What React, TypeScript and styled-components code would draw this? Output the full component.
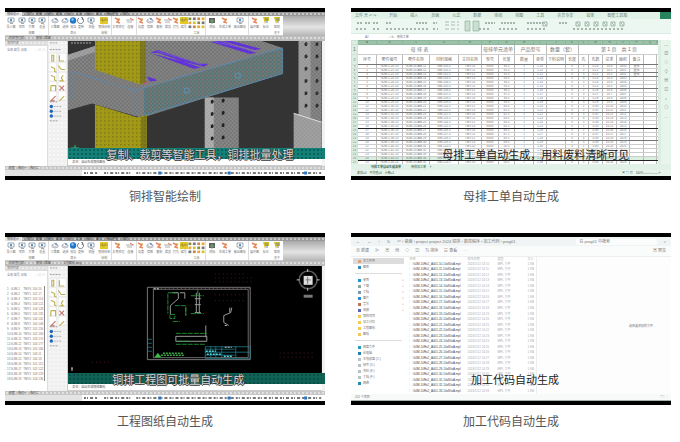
import React from "react";
import styled, { createGlobalStyle, css } from "styled-components";

const GlobalStyle = createGlobalStyle`
  * { box-sizing: border-box; }
  body {
    margin: 0;
    background: #fff;
    color: #555;
    font-family: "Liberation Sans", "Noto Sans CJK SC", sans-serif;
  }
`;

const Gallery = styled.main`
  display: grid;
  grid-template-columns: repeat(2, minmax(0, 1fr));
  column-gap: 26px;
  row-gap: 27px;
  padding: 8px 9px 8px 5px;
`;

const Figure = styled.figure`
  margin: 0;
  min-width: 0;
`;

const Caption = styled.figcaption`
  margin-top: 6px;
  font-size: 12px;
  line-height: 20px;
  text-align: center;
  font-family: "Noto Sans CJK SC", sans-serif;
`;

const Frame = styled.div`
  position: relative;
  display: flex;
  flex-direction: column;
  aspect-ratio: 320 / 172;
  overflow: hidden;
  border-top: 4px solid #000;
  border-bottom: 4px solid #000;
  background: #fff;
  white-space: nowrap;
  line-height: 4px;
  font-size: 3px;
  color: #777;
`;

const Subtitle = styled.div<{ $left: number; $light?: boolean }>`
  position: absolute;
  bottom: 16px;
  left: ${(p) => p.$left}%;
  font: 11px/12px "Noto Sans CJK SC", sans-serif;
  color: #222;
  ${(p) =>
    p.$light &&
    css`
      color: #d3d8d6;
      text-shadow: 1px 0 #333, 0 1px #333, -1px 0 #444;
    `}
`;

const dots = css`
  background-image: radial-gradient(circle, rgba(255, 255, 255, 0.45) 1px, transparent 1px);
  background-size: 4px 4px;
`;

/* ---------- CAD window ---------- */

const MenuStrip = styled.div`
  display: flex;
  flex: 0 0 4px;
  gap: 4px;
  background-color: #999;
  color: #444;
  ${dots}
`;
const ActiveMenu = styled.span`
  width: 17px;
  padding-left: 2px;
  background: #e8e8e8;
`;
const Ribbon = styled.div`
  display: flex;
  flex: 0 0 19px;
  background: #fff;
`;
const RibbonBody = styled.div`
  display: flex;
  flex: 278 1 0;
  min-width: 0;
  border-bottom: 1px solid #ccc;
`;
const RibbonTail = styled.div`
  flex: 42 1 0;
  background-image: linear-gradient(#aaa, #e4e4e4 55%, #b4b4b4);
`;
const Tool = styled.div<{ $grow: number; $divider?: boolean }>`
  display: flex;
  flex: ${(p) => p.$grow} 1 0;
  min-width: 0;
  flex-direction: column;
  align-items: center;
  padding-top: 1px;
  gap: 1px;
  overflow: hidden;
  border-right: ${(p) => (p.$divider ? "1px solid #ddd" : "0")};
  svg { display: block; flex: none; }
`;
const GroupName = styled.span`
  margin-top: 1px;
  color: #777;
`;
const DocTabs = styled.div`
  display: flex;
  flex: 0 0 5px;
  gap: 12px;
  padding: 0 4px;
  background-color: #bdbdbd;
  color: #555;
  ${dots}
`;
const Workspace = styled.div`
  display: flex;
  flex: 1;
  min-height: 0;
`;
const TreePanel = styled.div`
  flex: 0 0 13.5%;
  min-width: 0;
  padding: 1px 2px;
  overflow: hidden;
  background: #fff;
  border-right: 1px solid #ddd;
`;
const PanelTitle = styled.div`
  height: 5px;
  margin: -1px -2px 2px;
  padding-left: 2px;
  background-color: #ddd;
  ${dots}
`;
const TreeTable = styled.table`
  width: 100%;
  margin-top: 9px;
  border-collapse: collapse;
  border-right: 1px solid #888;
  td { padding: 0; height: 5px; line-height: 4px; }
`;
const Filters = styled.div`
  display: flex;
  margin-top: 1px;
  justify-content: space-between;
  color: #789;
`;
const Toolbox = styled.div`
  flex: 0 0 6.25%;
  min-width: 0;
  background-color: #f0f0f0;
  overflow: hidden;
  border-right: 1px solid #ccc;
  ${dots}
  svg { display: block; width: 100%; }
`;
const Viewport = styled.div`
  display: flex;
  flex-direction: column;
  flex: 1 1 0;
  min-width: 0;
  background: #333;
  svg { display: block; flex: 1; min-height: 0; width: 100%; }
`;
const Edge = styled.div<{ $color: string }>`
  display: flex;
  flex: 0 0 1%;
  flex-direction: column;
  justify-content: flex-end;
  padding-bottom: 7px;
  background: #f2f2f2;
  &::after { content: ""; height: 11px; background: ${(p) => p.$color}; }
`;
const Band = styled.div<{ $color: string }>`
  flex: 0 0 11px;
  background-color: ${(p) => p.$color};
  background-image: radial-gradient(circle, rgba(0, 50, 50, 0.4) 1px, transparent 1px);
  background-size: 4px 4px;
`;
const Command = styled.div`
  flex: 0 0 7px;
  padding: 1px 4px;
  background: #fff;
  border-bottom: 1px solid #ccc;
  color: #555;
`;
const Footer = styled.div`
  flex: 0 0 4px;
  padding-left: 4px;
  background-color: #c6c6c6;
  color: #444;
  ${dots}
`;
const StatusIcons = styled.div`
  display: flex;
  flex: 0 0 6px;
  align-items: center;
  background: #e4e4e4;
  svg { margin-left: 24%; width: 76%; height: 6px; background: #fff; }
`;

type IconKind = "screen" | "cube" | "globe" | "sync" | "plate" | "bend" | "link" | "flag" | "grid" | "dark";

function ToolIcon({ kind }: { kind: IconKind }) {
  if (kind === "grid")
    return (
      <svg width="17" height="12" viewBox="0 0 17 12">
        {[0, 1, 2, 3].map((c) =>
          [0, 1, 2].map((r) => (
            <rect key={`${c}${r}`} x={c * 4.4 + 0.5} y={r * 4 + 0.5} width="2.8" height="2.6"
              fill={["#8b8b39", "#e9a735", "#777", "#d6bd3a", "#c98643"][(c * 2 + r) % 5]} />
          )),
        )}
      </svg>
    );
  return (
    <svg width="8" height="7" viewBox="0 0 8 7" fill="none">
      {kind === "screen" && (<><path d="M1 1h6v4H1zM3 6.5h3M4 5v1" stroke="#8593a0" strokeWidth=".8" /><path d="M3 2h2v2H3z" fill="#5f93bf" /></>)}
      {kind === "cube" && (<><path d="M1 3l3-2 3 2-3 2zM1 3v2l3 1 3-1V3" stroke="#99a" strokeWidth=".7" /><path d="M4 1h2v2H4z" fill="#79a7d2" /></>)}
      {kind === "globe" && (<><circle cx="4" cy="3.5" r="3.2" fill="#2377c8" /><path d="M2 2l2-1 1 2-2 1z" fill="#91c5ec" /></>)}
      {kind === "sync" && <path d="M5 1A3 3 0 1 1 2 1M4 0l2 1-1 2" stroke="#56606a" strokeWidth=".8" />}
      {kind === "plate" && (<><path d="M0 0h8v7H0z" fill="#e2ca2c" /><path d="M0 3h8M2 1l1 4M6 1L4 4" stroke="#a38e2c" strokeWidth=".8" /></>)}
      {kind === "bend" && (<><path d="M1 1l4 2-2 2 3 1" stroke="#e8855c" strokeWidth="1.5" /><path d="M5 1v2" stroke="#c5a22d" /></>)}
      {kind === "link" && (<><path d="M0 3h8M1 5h5" stroke="#999" strokeWidth=".8" /><path d="M4 1l3 2" stroke="#dc7050" /></>)}
      {kind === "flag" && (<><path d="M1 0h6v4H4L3 7z" fill="#d7bd25" /><path d="M3 2h3M5 3v3" stroke="#658799" /></>)}
      {kind === "dark" && (<><path d="M1 1h6v5H1z" fill="#5d6265" /><path d="M4 2v5M2 4h4" stroke="#78a867" /></>)}
    </svg>
  );
}

const tools: [number, IconKind, string, string?][] = [
  [12, "screen", "导入图"], [10, "screen", "项目"], [10, "screen", "方案", "视图"], [12, "screen", "设置"],
  [12, "cube", "三维图"], [9, "cube", "选择"], [7, "globe", "视角", "显示"], [9, "sync", "更新"],
  [12, "screen", "测量"], [14, "plate", "铜排绘制", "绘制"], [13, "bend", "折弯处理"], [11, "link", "连接"],
  [9, "bend", "角度"], [9, "cube", "镜像"], [10, "bend", "复制"], [8, "link", "裁剪"],
  [8, "bend", "打孔"], [8, "plate", "编号"], [18, "grid", "", "工具"], [12, "dark", "校验"],
  [14, "bend", "生成工单"], [16, "screen", "输出图纸"], [12, "bend", "展开图"], [11, "flag", "标注"], [12, "flag", "帮助", "关于"],
];
const dividers = [3, 9, 11, 18, 21];

function PlateTools() {
  const shapes = [
    "M4 3h2v6H4z", "M12 3v6h5", "M3 15l4 2v3l2 1", "M11 14l3 4h4",
    "M3 24l4 2v3l2 1", "M16 24l-2 3 2 3h-4", "M3 35v6M3 35h5v6", "M12 35l5 5M17 35l-5 5",
    "M8 46l-5 5h4", "M17 46l-5 5",
  ];
  return (
    <svg viewBox="0 0 20 98" preserveAspectRatio="xMidYMin meet" fill="none">
      {[14, 24, 34, 44, 54].map((y) => (
        <path key={y} d={`M1 ${y - 1}h8v9H1zM11 ${y - 1}h8v9h-8z`} fill="#fff" stroke="#ddd" strokeWidth=".5" />
      ))}
      {shapes.map((d, i) => (
        <path key={d} d={d} transform="translate(0 12)" stroke={i === 7 || i === 8 ? "#c4736c" : "#bdb152"} strokeWidth="1.2" />
      ))}
      <path d="M2 2h9M2 9h11M2 64h8M2 84h9" stroke="#888" strokeDasharray="2 1" strokeWidth=".8" />
      {[69, 74, 79].map((y) => (
        <g key={y}><circle cx="3.5" cy={y} r="1.8" fill="#1e68bb" /><path d={`M6 ${y}h9`} stroke="#999" strokeWidth=".8" strokeDasharray="2 1" /></g>
      ))}
    </svg>
  );
}

const holes = (x: number, y: number, n: number) =>
  Array.from({ length: n }, (_, i) => (
    <path key={`${x}-${i}`} d={`M${x} ${y + i * 12.4}l2 -1 1 2 -1 2 -2 0z`} fill="#222" />
  ));

function BusbarScene() {
  return (
    <svg viewBox="68 40 254 108" preserveAspectRatio="none">
      <defs>
        <pattern id="meshLight" width="4" height="4" patternUnits="userSpaceOnUse">
          <path d="M0 0h2v2H0zM2 2h2v2H2z" fill="#fff" opacity=".12" />
        </pattern>
        <pattern id="meshTeal" width="4" height="4" patternUnits="userSpaceOnUse">
          <path d="M0 0h1.5v1.5H0z" fill="#2a8f8a" opacity=".6" />
        </pattern>
        <pattern id="meshGold" width="4" height="4" patternUnits="userSpaceOnUse">
          <path d="M0 0h1.5v1.5H0z" fill="#655f13" opacity=".6" />
        </pattern>
      </defs>
      <path d="M68 40h254v108H68z" fill="#343434" />
      <path d="M205 97h34v51h-34z" fill="#777" />
      <path d="M205 97h9v51h-9z" fill="#a5a5a5" />
      <path d="M205 97h34v51h-34z" fill="url(#meshLight)" />
      {holes(211, 100, 4)}{holes(222, 99, 4)}
      <path d="M299 40h23v108h-23z" fill="#777" />
      <path d="M299 40h12v108h-12z" fill="#949494" />
      {holes(305, 42, 6)}{holes(316, 42, 6)}
      <path d="M294 113l28 9v26h-28z" fill="#969696" />
      <path d="M294 113l28 9" stroke="#ddd" />
      <path d="M299 40h23v108h-28v-35h5z" fill="url(#meshLight)" />
      <path d="M68 54l27-9V40h167l21 7v26l-136 43-7 1-48-14-24 7z" fill="#747474" />
      <path d="M68 54l27-9v6l-27 9z" fill="#969696" />
      <path d="M144 88l139-41v26l-139 43z" fill="#626b6b" />
      <path d="M68 54l27-9V40h167l21 7v26l-136 43-7 1-48-14-24 7z" fill="url(#meshLight)" />
      <path d="M144 88l139-41v26l-139 43z" fill="url(#meshTeal)" />
      <path d="M73 71l61 19 149-43v26M73 71v27M134 90v26M144 88v26M144 115l139-42" fill="none" stroke="#4e8fc4" strokeWidth=".8" strokeDasharray="3 1" />
      <path d="M95 40h51v42l-6 2-45-15z" fill="#a29a17" />
      <path d="M95 104l42 13 10-2v33H95z" fill="#a29a17" />
      <path d="M140 40h6v42l-6 2zM141 117l6-2v33h-6z" fill="#807a1c" />
      <path d="M95 40h51v42l-6 2-45-15zM95 104l42 13 10-2v33H95z" fill="url(#meshGold)" />
      <path d="M150 52l8-3 42 14 9 0-5 3zM150 52l44 16 7-1-42-15zM211 41l39 12 7-1-37-12zM222 40l33 9 7-1-30-8zM147 76l8 2 2 2-7 1z" fill="#6132da" />
      <path d="M157 50l45 14M215 41l42 9" stroke="#816bc4" strokeWidth=".6" />
      <path d="M143 83l5-2" stroke="#dc3d7c" />
      <circle cx="238" cy="75" r="2.7" fill="none" stroke="#5398bd" />
      <circle cx="187" cy="90" r="2.7" fill="none" stroke="#5398bd" />
      <path d="M71 42h20" stroke="#aaa" strokeDasharray="2 1" />
      <path d="M75 145v3M71 148h8" stroke="#3b7" />
    </svg>
  );
}

function DrawingScene() {
  return (
    <svg viewBox="68 265 254 108" preserveAspectRatio="none" fill="none">
      <path d="M68 265h254v108H68z" fill="#000" />
      <path d="M147.500 286.500h103v73h-103z" stroke="#777" />
      <path d="M153.500 288.500h95v69h-95z" stroke="#999" strokeWidth=".7" />
      <path d="M153 287.500h97" stroke="#9d4e58" strokeDasharray="1 3" />
      <g stroke="#999">
        <path d="M170.500 314v-9l8-7v-6h-6M180 292h5v6M196.500 292v20M199.500 292v20M195 312h6M195 298h6M195 304h6" />
        <path d="M232 307l-1 5-7 3v7l5 3M230 307v5M206 325v12M176 336h31v5h-31z" />
      </g>
      <g stroke="#2aa63c" strokeWidth=".8">
        <path d="M168 292h9M168 293v20M170 314h5v4h-5zM175 305h11v10M191 295h13M191 313h13M176 333h31M178 341h12M176 344h30M173 321h7M198 289v5M186 307v8" strokeDasharray="5 1" />
        <path d="M161 355h23M163 353h21" stroke="#3aa843" strokeWidth="1.500" strokeDasharray="2 1" />
        <path d="M158 353l3 4h-6z" fill="#42c94a" />
      </g>
      <g stroke="#238c9d" strokeWidth=".7">
        <path d="M148 339h4M148 343h4M148 347h4M148 351h4M205.500 346.500h45v12h-45zM222 346v12M236 346v12M205 349h30M205 352h45M205 355h30M211 346v12M216 346v12" />
        <path d="M206 351h10M207 354h14M224 356h8" stroke="#50d8df" strokeWidth="1.500" strokeDasharray="2 1" />
      </g>
      <path d="M225 347h7M154 288h5M225 325h3M72 367v4M71 369h3" stroke="#ccc" strokeDasharray="2 1" />
      <g stroke="#4c1920" strokeDasharray="1 3">
        <path d="M215 273h30M215 277h40M215 281h38M215 294h33M215 300h30M280 353h34M280 357h34M92 362h18" />
      </g>
      <circle cx="308.500" cy="279" r="9" stroke="#585858" strokeWidth="1.600" />
      <path d="M308 268v3M308 287v3M297 279h3M317 279h3" stroke="#bbb" />
      <path d="M304 275h9v9h-9z" fill="#ddd" />
      <path d="M308 276v7M306 279h5" stroke="#777" />
      <path d="M304 294h9v3h-9z" fill="#777" />
    </svg>
  );
}

function CadFrame({ drawing }: { drawing?: boolean }) {
  const teal = drawing ? "#106257" : "#138078";
  return (
    <Frame>
      <MenuStrip>
        <ActiveMenu>铜排设计</ActiveMenu>
        {["项目", "视图", "绘制", "编辑", "标注", "工具", "输出", "窗口", "数据管理", "帮助"].map((m) => <span key={m}>{m}</span>)}
      </MenuStrip>
      <Ribbon>
        <RibbonBody>
          {tools.map(([grow, kind, name, group], i) => (
            <Tool key={i} $grow={grow} $divider={dividers.includes(i)}>
              <ToolIcon kind={kind} />{name && <span>{name}</span>}{group && <GroupName>{group}</GroupName>}
            </Tool>
          ))}
        </RibbonBody>
        <RibbonTail />
      </Ribbon>
      <DocTabs><span>项目管理器</span><span>铜排三维图</span>{drawing && <span>工程图纸.dwg</span>}</DocTabs>
      <Workspace>
        <TreePanel>
          <PanelTitle>项目列表</PanelTitle>
          <Filters><span>全部 编号 规格</span><span>□ ◇ △</span></Filters>
          {drawing && (
            <TreeTable><tbody>
              {Array.from({ length: 19 }, (_, i) => (
                <tr key={i}><td>{i + 1}</td><td>GJM-{i + 1}</td><td>TMY{i % 3}</td><td>10{i % 7}</td><td>1{(i * 7) % 90}</td></tr>
              ))}
            </tbody></TreeTable>
          )}
        </TreePanel>
        <Toolbox><PlateTools /></Toolbox>
        <Viewport>
          {drawing ? <DrawingScene /> : <BusbarScene />}
          <Band $color={teal} />
          <Command>命令：自动生成铜排图纸</Command>
        </Viewport>
        <Edge $color={teal} />
      </Workspace>
      <Footer>模型　布局一　布局二</Footer>
      <StatusIcons>
        <svg viewBox="0 0 242 6" preserveAspectRatio="none">
          <path d="M2 3h13M22 3h28M54 3h184" stroke="#777" strokeWidth="2" strokeDasharray="2 1 1 2 3 2" />
          <path d="M76 3h3M145 3h3M221 3h3" stroke="#2874c4" strokeWidth="3" />
        </svg>
      </StatusIcons>
      {drawing ? <Subtitle $left={33.5} $light>铜排工程图可批量自动生成</Subtitle>
        : <Subtitle $left={31.7} $light>复制、裁剪等智能工具，铜排批量处理</Subtitle>}
    </Frame>
  );
}

/* ---------- Spreadsheet window ---------- */

const SheetMenu = styled.div`
  display: flex;
  flex: 0 0 7px;
  align-items: center;
  gap: 13px;
  padding-left: 4px;
  background: #e2f2e8;
  color: #6b8676;
  font-size: 4px;
`;
const ShareTag = styled.span`
  align-self: stretch;
  width: 11px;
  margin-left: auto;
  background: #25845b;
`;
const SheetTools = styled.div`
  display: flex;
  flex: 0 0 14px;
  background: #edf7f1;
  svg { width: 100%; height: 14px; }
`;
const FormulaBar = styled.div`
  display: flex;
  flex: 0 0 7px;
  align-items: center;
  gap: 20px;
  padding-left: 14px;
  border-top: 1px solid #dcebe1;
  background: #fff;
`;
const SheetBody = styled.div`
  display: flex;
  flex: 1;
  min-height: 0;
`;
const SheetScroll = styled.div`
  flex: 1 1 0;
  min-width: 0;
  overflow: hidden;
  border-right: 3px solid #dceee3;
`;
const SideRail = styled.div`
  display: flex;
  flex: 0 0 3%;
  flex-direction: column;
  align-items: center;
  gap: 5px;
  padding-top: 3px;
  background: #e8f5ed;
  color: #6c8979;
  font-size: 4px;
`;
const Grid = styled.table`
  width: 100%;
  table-layout: fixed;
  border-collapse: collapse;
  text-align: center;
  color: #777;
  td, th {
    height: 4px;
    padding: 0;
    overflow: hidden;
    border: 1px solid #bbb;
    font-weight: 400;
    line-height: 3px;
  }
  th:first-child { background: #dceee3; border-color: #cde2d5; }
  thead th { background: #9cc2aa; border-color: #8eb69d; color: #4e6f5c; height: 4px; }
`;
const GridRow = styled.tr<{ $rule?: "strong" | "mid"; $height?: number; $size?: number; $green?: boolean }>`
  && td, && th { height: ${(p) => p.$height ?? 4}px; font-size: ${(p) => p.$size ?? 3}px; }
  && td {
    border-bottom-color: ${(p) => (p.$rule === "strong" ? "#222" : p.$rule === "mid" ? "#777" : "#ccc")};
    background: ${(p) => (p.$green ? "#d8efdf" : "#fff")};
  }
`;
const SheetTabs = styled.div`
  display: flex;
  flex: 0 0 6px;
  align-items: center;
  gap: 10px;
  padding-left: 20px;
  background: #e1f1e7;
  color: #335e47;
`;
const SheetStatus = styled(SheetTabs)`
  padding: 0 10px 0 6px;
  justify-content: space-between;
  background: #e8f4ec;
`;

const colWidths = [6, 19, 26, 27, 29, 23, 17, 16, 19, 13, 19, 13, 10, 14, 14, 13, 14, 13, 3];
const headings = ["序号", "零件编号", "零件名称", "材料规格", "主材名称", "型号", "长度", "数量", "单重", "下料说明", "长度", "孔", "孔数", "总重", "面积", "备注", "", ""];

function SheetFrame() {
  return (
    <Frame>
      <SheetMenu>
        <span>文件 ▣ ↶ ↷</span><span>开始</span><span>插入</span><span>页面</span><span>公式</span><span>数据</span><span>审阅</span><span>视图</span><span>工具</span><span>会员专享</span><span>效率</span><span>智能工具箱</span><ShareTag />
      </SheetMenu>
      <SheetTools>
        <svg viewBox="0 0 320 14" preserveAspectRatio="none" fill="none">
          <path d="M6 4h5M14 4h5M22 4h5M35 4h6M65 4h12M82 4h4M134 4h10M150 4h14M176 4h16M208 4h8" stroke="#a5b5ab" strokeWidth="2" strokeDasharray="2 1" />
          <path d="M5 10h12M22 10h6M35 10h42M82 10h5M128 10h12M148 10h18M176 10h18M222 10h52" stroke="#929e97" strokeWidth="1.500" strokeDasharray="2 2" />
          <path d="M94 3h14M94 6h14M94 10h14" stroke="#9aaea3" strokeWidth=".8" strokeDasharray="4 2" />
          <path d="M114 2h5v10h-5zM122 2h6v10h-6z" fill="#c9dfd1" stroke="#78967f" strokeWidth=".5" />
          {[192, 225, 234, 243, 252, 260, 269].map((x) => <path key={x} d={`M${x} 3h4v4h-4zM${x + 1} 4l2 2`} stroke="#7d9989" strokeWidth=".7" />)}
        </svg>
      </SheetTools>
      <FormulaBar><span>A2</span><span>⌕ fx　母排工单</span></FormulaBar>
      <SheetBody>
        <SheetScroll>
          <Grid>
            <colgroup>{colWidths.map((w, i) => <col key={i} width={w} />)}</colgroup>
            <thead><tr><th />{colWidths.slice(1).map((_, i) => <th key={i}>{String.fromCharCode(65 + i)}</th>)}</tr></thead>
            <tbody>
              <GridRow $height={10} $size={5}>
                <th>1</th><td colSpan={5}>母 排 表</td><td colSpan={2}>母排单元清单</td><td colSpan={2}>产品型号</td><td colSpan={2}>数量（套）</td><td colSpan={7}>第 1 页　共 1 页</td>
              </GridRow>
              <GridRow $height={10} $size={4} $rule="mid"><th>2</th>{headings.map((h, i) => <td key={i}>{h}</td>)}</GridRow>
              {Array.from({ length: 25 }, (_, i) => (
                <GridRow key={i} $rule={[8, 15, 23].includes(i) ? "strong" : [1, 2, 5, 11, 18].includes(i) ? "mid" : undefined} $green={i === 23}>
                  <th>{i + 3}</th><td>{i + 1}</td><td>GJM-1-{i + 20}-10</td><td>GJM-10-AM-{i + 11}</td><td>GM-{100 + i}-5</td><td>TMY-{10 + (i % 4)}</td><td>80X8</td><td>{30 + i}.5</td><td>1</td><td>1.{i + 10}</td><td /><td>0</td><td>{(i % 5) + 1}</td><td>0.{i + 20}</td><td>10.{i}</td><td>{2600 + i}</td><td>{i < 3 ? "直排" : ""}</td><td /><td />
                </GridRow>
              ))}
              <GridRow $height={5} $size={4}><th /><td colSpan={8} /><td colSpan={2}>编 制</td><td colSpan={3}>审 核</td><td colSpan={2}>日 期</td><td colSpan={3}>第1页</td></GridRow>
            </tbody>
          </Grid>
        </SheetScroll>
        <SideRail>{["—", "▧", "◇", "♧", "▤", "▥", "⌕", "◎", "…"].map((s) => <span key={s}>{s}</span>)}</SideRail>
      </SheetBody>
      <SheetTabs><b>母排工单自动生成清单</b><span>母排加工单　＋</span></SheetTabs>
      <SheetStatus><span>求和=0　平均值=0　计数=1</span><span>▣ ▤ ▦　100% —○———＋</span></SheetStatus>
      <Subtitle $left={28.5}>母排工单自动生成，用料废料清晰可见</Subtitle>
    </Frame>
  );
}

/* ---------- File explorer window ---------- */

const PathBar = styled.div`
  display: flex;
  flex: 0 0 9px;
  align-items: center;
  gap: 7px;
  padding: 0 5px;
  background: #f0f4f4;
  color: #777;
  font-size: 4px;
`;
const SearchBox = styled.span`
  width: 26%;
  margin-left: auto;
  line-height: 6px;
  padding-left: 3px;
  background: #fbfcfc;
`;
const ExplorerTools = styled(PathBar)`
  flex-basis: 11px;
  gap: 6px;
  background: #fafbfb;
  border-bottom: 1px solid #eee;
`;
const Push = styled.span`
  margin-left: auto;
`;
const ExplorerBody = styled.div`
  display: flex;
  flex: 1;
  min-height: 0;
`;
const Nav = styled.nav`
  flex: 0 0 17%;
  min-width: 0;
  padding: 1px 1px 0 2px;
  overflow: hidden;
`;
const Place = styled.div<{ $color: string; $active?: boolean }>`
  display: flex;
  align-items: center;
  gap: 2px;
  height: 6px;
  padding-left: 5px;
  background: ${(p) => (p.$active ? "#dcdcdc" : "transparent")};
  &::before { content: ""; width: 3px; height: 3px; background: ${(p) => p.$color}; }
`;
const Rule = styled.hr`
  height: 1px;
  margin: 3px 2px;
  border: 0;
  background: #ddd;
`;
const Pin = styled.span`
  margin-left: auto;
`;
const Files = styled.div`
  flex: 0 0 41%;
  min-width: 0;
  overflow: hidden;
  border-right: 1px solid #eee;
`;
const FileTable = styled.table`
  width: 100%;
  height: 100%;
  table-layout: fixed;
  border-collapse: collapse;
  color: #aaa;
  td, th {
    padding: 0 0 0 4px;
    overflow: hidden;
    text-align: left;
    font-weight: 400;
    font-size: 3px;
    line-height: 4px;
  }
  td:first-child { color: #444; }
`;
const Preview = styled.div`
  display: flex;
  flex: 1 1 0;
  align-items: center;
  justify-content: flex-end;
  padding-right: 18px;
  background: #fdfdfd;
  font-size: 3px;
`;
const ExplorerStatus = styled.div`
  display: flex;
  flex: 0 0 7px;
  align-items: center;
  justify-content: space-between;
  padding: 0 4px;
  background: #f7faf9;
  border-bottom: 1px solid #a9b3b1;
`;

const places: [string, string, boolean?, boolean?][] = [
  ["主文件夹", "#dda27c", false], ["图库", "#3789c4", false, true],
  ["桌面", "#2195ce", true], ["下载", "#8aa7a5", true], ["文档", "#7898b0", true], ["图片", "#318bc7", true],
  ["音乐", "#bd765a", true], ["视频", "#5a65bd", true], ["铜排项目", "#f0ca5c"], ["加工代码", "#f0ca5c"],
  ["工程图纸", "#f0ca5c"], ["图纸", "#f0ca5c", false, true],
  ["网盘文件", "#2a9abc"], ["此电脑", "#247fae"], ["本地磁盘 (C:)", "#b9c2c8"], ["软件 (D:)", "#b9c2c8"],
  ["资料 (E:)", "#b9c2c8"], ["文档 (F:)", "#b9c2c8"], ["网络", "#278bb8"],
];

function ExplorerFrame() {
  return (
    <Frame>
      <PathBar><span>←</span><span>→</span><span>↑</span><span>↻</span><span>▱ › 桌面 › project project 2024 铜排 › 数控程序 › 加工代码 › prog01</span><SearchBox>在 prog01 中搜索</SearchBox><span>⌕</span></PathBar>
      <ExplorerTools><span>⊕ 新建</span><span>✂</span><span>▣</span><span>▤</span><span>◇</span><span>▥</span><span>⇅ 排序</span><span>☷ 查看</span><span>···</span><Push>▣ 预览</Push></ExplorerTools>
      <ExplorerBody>
        <Nav>
          {places.map(([name, color, pin, rule], i) => (
            <React.Fragment key={name}>
              <Place $color={color} $active={i === 0}>{name}{pin && <Pin>⌖</Pin>}</Place>
              {rule && <Rule />}
            </React.Fragment>
          ))}
        </Nav>
        <Files>
          <FileTable>
            <colgroup><col width="58" /><col width="30" /><col width="30" /><col width="12" /></colgroup>
            <thead><tr><th>名称</th><th>修改日期</th><th>类型</th><th>大小</th></tr></thead>
            <tbody>
              {Array.from({ length: 24 }, (_, i) => (
                <tr key={i}><td>▢ GJM-10Rx2_A001-{10 + i}-10x80xA.mpl</td><td>2024/1/12 14:{10 + i}</td><td>MPL 文件</td><td>1 KB</td></tr>
              ))}
            </tbody>
          </FileTable>
        </Files>
        <Preview>选择要预览的文件</Preview>
      </ExplorerBody>
      <ExplorerStatus><span>201 个项目</span><span>▤ ▢</span></ExplorerStatus>
      <Subtitle $left={37.5}>加工代码自动生成</Subtitle>
    </Frame>
  );
}

export default function App() {
  return (
    <>
      <GlobalStyle />
      <Gallery>
        <Figure><CadFrame /><Caption>铜排智能绘制</Caption></Figure>
        <Figure><SheetFrame /><Caption>母排工单自动生成</Caption></Figure>
        <Figure><CadFrame drawing /><Caption>工程图纸自动生成</Caption></Figure>
        <Figure><ExplorerFrame /><Caption>加工代码自动生成</Caption></Figure>
      </Gallery>
    </>
  );
}
